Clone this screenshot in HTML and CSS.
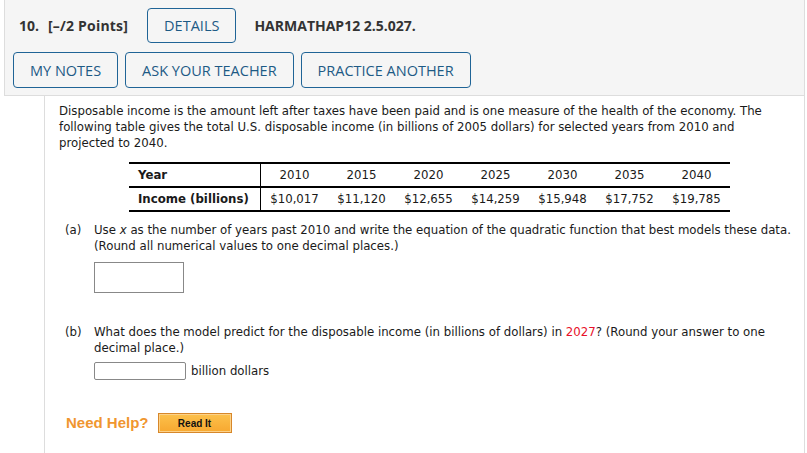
FILE: index.html
```html
<!DOCTYPE html>
<html lang="en">
<head>
    <meta charset="UTF-8">
    <meta name="viewport" content="width=device-width, initial-scale=1.0">
    <title>Question 10</title>
    <link rel="stylesheet" href="styles.css">
</head>
<body>
    <div class="question">
        <div class="q-header">
            <div class="q-title">
                <span class="q-num">10.</span>
                <span class="q-points">[&ndash;/2 Points]</span>
                <button class="q-btn details">DETAILS</button>
                <span class="q-code">HARMATHAP12 2.5.027.</span>
            </div>
            <div class="q-actions">
                <button class="q-btn">MY NOTES</button>
                <button class="q-btn">ASK YOUR TEACHER</button>
                <button class="q-btn">PRACTICE ANOTHER</button>
            </div>
        </div>

        <div class="q-body">
            <p class="intro">Disposable income is the amount left after taxes have been paid and is one measure of the health of the economy. The following table gives the total U.S. disposable income (in billions of 2005 dollars) for selected years from 2010 and projected to 2040.</p>

            <table class="data-table">
                <tr>
                    <th>Year</th>
                    <td>2010</td>
                    <td>2015</td>
                    <td>2020</td>
                    <td>2025</td>
                    <td>2030</td>
                    <td>2035</td>
                    <td>2040</td>
                </tr>
                <tr>
                    <th>Income (billions)</th>
                    <td>$10,017</td>
                    <td>$11,120</td>
                    <td>$12,655</td>
                    <td>$14,259</td>
                    <td>$15,948</td>
                    <td>$17,752</td>
                    <td>$19,785</td>
                </tr>
            </table>

            <div class="part part-a">
                <span class="part-label">(a)</span>
                <div class="part-text">
                    <p>Use <i>x</i> as the number of years past 2010 and write the equation of the quadratic function that best models these data. (Round all numerical values to one decimal places.)</p>
                    <div class="answer-box"></div>
                </div>
            </div>

            <div class="part part-b">
                <span class="part-label">(b)</span>
                <div class="part-text">
                    <p>What does the model predict for the disposable income (in billions of dollars) in <span class="hl">2027</span>? (Round your answer to one decimal place.)</p>
                    <div class="answer-line">
                        <input type="text" class="answer-input">
                        <span>billion dollars</span>
                    </div>
                </div>
            </div>

            <div class="help">
                <span class="help-label">Need Help?</span>
                <button class="read-it">Read It</button>
            </div>
        </div>
    </div>
</body>
</html>
```

FILE: styles.css
```css
body {
    margin: 0;
    background-color: #fff;
    font-family: "Open Sans", Arial, sans-serif;
}
.question {
    margin-left: 4px;
    width: 801px;
}
.q-header {
    background-color: #f5f5f5;
    border-left: 1px solid #ddd;
    border-right: 1px solid #ddd;
    border-bottom: 1px solid #ddd;
    padding: 8px 8px 7px 8px;
}
.q-title {
    display: flex;
    align-items: center;
    padding-left: 6px;
    color: #333;
    font-size: 14px;
    font-weight: bold;
}
.q-points {
    margin-left: 9px;
    letter-spacing: 0.2px;
}
.q-btn {
    font-family: "Open Sans", Arial, sans-serif;
    font-size: 14.5px;
    color: #1d5a85;
    background-color: transparent;
    border: 1px solid #1f6496;
    border-radius: 4px;
    height: 36px;
    padding: 0 16px;
    cursor: pointer;
}
.details {
    margin-left: 19px;
    height: 35px;
}
.q-code {
    margin-left: 18px;
}
.q-actions {
    display: flex;
    gap: 7px;
    margin-top: 9px;
}
.q-body {
    margin-left: 40px;
    border-left: 1px solid #ddd;
    border-right: 1px solid #ddd;
    padding: 7px 11px 20px 14px;
    font-family: "DejaVu Sans", Verdana, sans-serif;
    font-size: 11.75px;
    line-height: 16px;
    color: #1a1a1a;
}
.q-body p {
    margin: 0;
}
.data-table {
    margin: 11px 0 0 70px;
    border-collapse: collapse;
    border-top: 2px solid #000;
    border-bottom: 2px solid #000;
}
.data-table tr + tr {
    border-top: 2px solid #000;
}
.data-table th {
    text-align: left;
    width: 122px;
    padding: 0 0 0 9px;
    height: 22px;
    border-right: 1px solid #000;
    font-weight: bold;
}
.data-table td {
    width: 67px;
    padding: 0;
    text-align: center;
}
.part {
    display: flex;
    margin-top: 10px;
    padding-left: 6px;
}
.part-label {
    width: 29px;
    flex-shrink: 0;
}
.part-text {
    flex: 1;
}
.part-b {
    margin-top: 31px;
}
.answer-box {
    width: 88px;
    height: 29px;
    margin-top: 8px;
    border: 1px solid #888;
}
.answer-line {
    display: flex;
    align-items: center;
    gap: 5px;
    margin-top: 6px;
}
.answer-input {
    width: 90px;
    height: 16px;
    margin: 0;
    padding: 0;
    border: 1px solid #888;
    border-radius: 2px;
}
.hl {
    color: #e8102a;
}
.help {
    display: flex;
    align-items: center;
    gap: 9px;
    margin: 33px 0 0 7px;
}
.help-label {
    font-family: "Liberation Sans", Arial, sans-serif;
    font-size: 15px;
    font-weight: bold;
    color: #f0962f;
}
.read-it {
    font-family: "Liberation Sans", Arial, sans-serif;
    font-size: 10px;
    font-weight: bold;
    color: #111;
    width: 74px;
    height: 20px;
    padding: 0;
    border: 1px solid #d7872a;
    box-shadow: inset 0 0 0 1px #fcd28a;
    background: linear-gradient(#fcc14c, #f7a830);
    cursor: pointer;
}
```
